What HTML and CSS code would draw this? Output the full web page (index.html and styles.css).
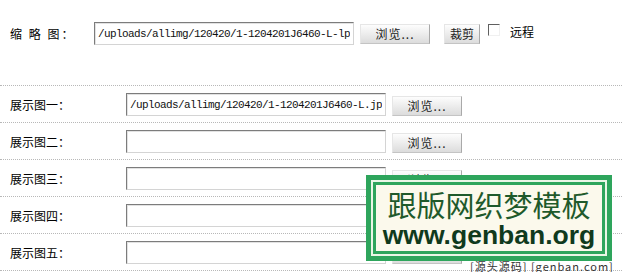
FILE: index.html
```html
<!DOCTYPE html>
<html lang="zh-CN">

  <head>
    <meta charset="UTF-8">
    <meta name="viewport" content="width=device-width, initial-scale=1.0">
    <title>图片设置</title>
    <link rel="stylesheet" href="styles.css">
  </head>

  <body>
    <div class="form">
      <!-- 缩略图 -->
      <div class="row row-thumb">
        <span class="label label-thumb">缩 略 图：</span>
        <input class="text" type="text" value="/uploads/allimg/120420/1-1204201J6460-L-lp.jpg">
        <button class="btn btn-browse">浏览...</button>
        <button class="btn btn-crop">裁剪</button>
        <label class="remote"><span class="check"></span>远程</label>
      </div>

      <!-- 展示图 -->
      <div class="row">
        <span class="label">展示图一：</span>
        <input class="text" type="text" value="/uploads/allimg/120420/1-1204201J6460-L.jpg">
        <button class="btn btn-browse">浏览...</button>
      </div>
      <div class="row">
        <span class="label">展示图二：</span>
        <input class="text" type="text" value="">
        <button class="btn btn-browse">浏览...</button>
      </div>
      <div class="row">
        <span class="label">展示图三：</span>
        <input class="text" type="text" value="">
        <button class="btn btn-browse">浏览...</button>
      </div>
      <div class="row">
        <span class="label">展示图四：</span>
        <input class="text" type="text" value="">
        <button class="btn btn-browse">浏览...</button>
      </div>
      <div class="row">
        <span class="label">展示图五：</span>
        <input class="text" type="text" value="">
        <button class="btn btn-browse">浏览...</button>
      </div>
    </div>

    <!-- 水印 -->
    <div class="watermark">
      <div class="watermark-inner">
        <div class="wm-title">跟版网织梦模板</div>
        <div class="wm-url">www.genban.org</div>
      </div>
    </div>
    <div class="wm-tail">[源头源码] [genban.com]</div>
  </body>

</html>
```

FILE: styles.css
```css
html,
body {
  margin: 0;
  padding: 0;
  width: 622px;
  height: 272px;
  overflow: hidden;
  background: #fff;
  font-family: "Noto Sans CJK SC", "Liberation Sans", sans-serif;
  font-size: 12px;
  color: #000;
}

/* 表单行 */
.row {
  display: flex;
  align-items: center;
  height: 23px;
  padding: 7px 0 6px 10px;
  border-bottom: 1px dotted #b8b8b8;
}

.row-thumb {
  align-items: flex-start;
  height: 63px;
  padding-top: 22px;
  padding-bottom: 0;
}

.label {
  width: 116px;
  flex-shrink: 0;
  line-height: 23px;
}

.label-thumb {
  width: 84px;
  letter-spacing: 2px;
}

.text {
  box-sizing: border-box;
  width: 260px;
  height: 23px;
  margin: 0;
  padding: 0 3px;
  border: 1px solid #d4d4d4;
  border-top-color: #7c7c7c;
  border-left-color: #7c7c7c;
  box-shadow: inset 1px 1px 0 #e2e2e2;
  background: #fff;
  font-family: "Liberation Mono", "DejaVu Sans Mono", monospace;
  font-size: 11px;
  letter-spacing: -0.6px;
  color: #111;
  outline: none;
}

/* 按钮 */
.btn {
  box-sizing: border-box;
  height: 20px;
  margin: 2px 0 0 6px;
  padding: 0;
  border: 1px solid #e6e6e6;
  border-right-color: #a9a9a9;
  border-bottom-color: #c4c4c4;
  background: linear-gradient(#fdfdfd, #e9e9e9 60%, #dcdcdc);
  font-family: "Noto Sans CJK SC", sans-serif;
  font-size: 12px;
  line-height: 18px;
  color: #222;
}

.btn-browse {
  width: 70px;
  letter-spacing: 1px;
}

.btn-crop {
  width: 36px;
  margin-left: 14px;
}

.remote {
  display: flex;
  align-items: flex-start;
  margin-left: 8px;
  line-height: 20px;
}

.check {
  box-sizing: border-box;
  width: 12px;
  height: 12px;
  margin: 2px 10px 0 0;
  border: 1px solid #f0f0f0;
  border-top-color: #606060;
  border-left-color: #606060;
  background: #fff;
}

/* 水印 */
.watermark {
  position: absolute;
  left: 366px;
  top: 175px;
  width: 246px;
  height: 86px;
  box-sizing: border-box;
  border: 5px solid #2ea55c;
  padding: 2px;
  background: #eaf6e6;
}

.watermark-inner {
  box-sizing: border-box;
  height: 100%;
  border: 3px solid #2ea55c;
  background: #fbf9ec;
  text-align: center;
}

.wm-title {
  margin-top: 2px;
  font-size: 29px;
  line-height: 34px;
  color: #1f5a2b;
}

.wm-url {
  font-family: "Liberation Sans", Arial, sans-serif;
  font-weight: bold;
  font-size: 26.5px;
  line-height: 28px;
  color: #103a1d;
}

.wm-tail {
  position: absolute;
  left: 470px;
  top: 261px;
  font-size: 11px;
  line-height: 11px;
  letter-spacing: 1px;
  color: #333;
  white-space: nowrap;
}
```
